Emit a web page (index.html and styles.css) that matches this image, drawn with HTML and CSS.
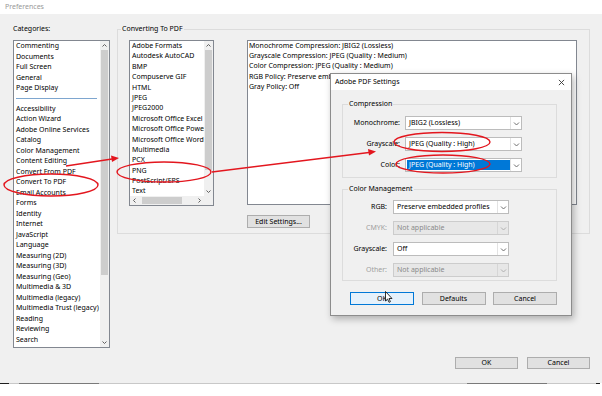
FILE: index.html
```html
<!DOCTYPE html>
<html lang="en">
<head>
  <meta charset="UTF-8">
  <title>Preferences</title>
  <link rel="stylesheet" href="styles.css">
</head>
<body>
  <div class="window">
    <div class="titlebar">Preferences</div>
    <div class="content">
      <div class="panes">
        <div class="categories">
          <div class="cat-label">Categories:</div>
          <div class="listbox cat-list">
            <ul class="items">
              <li>Commenting</li>
              <li>Documents</li>
              <li>Full Screen</li>
              <li>General</li>
              <li>Page Display</li>
              <li class="sep"></li>
              <li>Accessibility</li>
              <li>Action Wizard</li>
              <li>Adobe Online Services</li>
              <li>Catalog</li>
              <li>Color Management</li>
              <li>Content Editing</li>
              <li>Convert From PDF</li>
              <li>Convert To PDF</li>
              <li>Email Accounts</li>
              <li>Forms</li>
              <li>Identity</li>
              <li>Internet</li>
              <li>JavaScript</li>
              <li>Language</li>
              <li>Measuring (2D)</li>
              <li>Measuring (3D)</li>
              <li>Measuring (Geo)</li>
              <li>Multimedia &amp; 3D</li>
              <li>Multimedia (legacy)</li>
              <li>Multimedia Trust (legacy)</li>
              <li>Reading</li>
              <li>Reviewing</li>
              <li>Search</li>
              <li>Security</li>
            </ul>
            <div class="vscroll">
              <svg class="arrow" viewBox="0 0 9 9"><polyline points="2.5,5.5 4.5,3.5 6.5,5.5"/></svg>
              <div class="track"><div class="thumb cat-thumb"></div></div>
              <svg class="arrow" viewBox="0 0 9 9"><polyline points="2.5,3.5 4.5,5.5 6.5,3.5"/></svg>
            </div>
          </div>
        </div>

        <fieldset class="group convert">
          <legend>Converting To PDF</legend>
          <div class="convert-body">
            <div class="listbox fmt-list">
              <ul class="items">
                <li>Adobe Formats</li>
                <li>Autodesk AutoCAD</li>
                <li>BMP</li>
                <li>Compuserve GIF</li>
                <li>HTML</li>
                <li>JPEG</li>
                <li>JPEG2000</li>
                <li>Microsoft Office Excel</li>
                <li>Microsoft Office PowerPoint</li>
                <li>Microsoft Office Word</li>
                <li>Multimedia</li>
                <li>PCX</li>
                <li>PNG</li>
                <li>PostScript/EPS</li>
                <li>Text</li>
              </ul>
              <div class="vscroll">
                <svg class="arrow" viewBox="0 0 9 9"><polyline points="2.5,5.5 4.5,3.5 6.5,5.5"/></svg>
                <div class="track"><div class="thumb fmt-thumb"></div></div>
                <svg class="arrow" viewBox="0 0 9 9"><polyline points="2.5,3.5 4.5,5.5 6.5,3.5"/></svg>
              </div>
              <div class="hscroll">
                <svg class="arrow" viewBox="0 0 9 9"><polyline points="5.5,2.5 3.5,4.5 5.5,6.5"/></svg>
                <div class="htrack"><div class="hthumb"></div></div>
                <svg class="arrow" viewBox="0 0 9 9"><polyline points="3.5,2.5 5.5,4.5 3.5,6.5"/></svg>
              </div>
              <div class="corner"></div>
            </div>
            <div class="summary-col">
              <div class="summary">
                <div>Monochrome Compression: JBIG2 (Lossless)</div>
                <div>Grayscale Compression: JPEG (Quality : Medium)</div>
                <div>Color Compression: JPEG (Quality : Medium)</div>
                <div>RGB Policy: Preserve embedded profiles</div>
                <div>Gray Policy: Off</div>
              </div>
              <button class="btn edit-btn">Edit Settings...</button>
            </div>
          </div>
        </fieldset>
      </div>

      <div class="footer">
        <button class="btn main-btn">OK</button>
        <button class="btn main-btn">Cancel</button>
      </div>
    </div>
    <div class="rule">
      <span class="seg dark" style="width: 9px"></span>
      <span class="seg" style="width: 10px"></span>
      <span class="seg mid" style="width: 80px"></span>
      <span class="seg" style="width: 368px"></span>
      <span class="seg mid" style="width: 80px"></span>
      <span class="seg" style="width: 49px"></span>
      <span class="seg dark" style="width: 4px"></span>
    </div>
  </div>

  <!-- Adobe PDF Settings dialog, floating over the preferences -->
  <div class="dialog">
    <div class="dlg-title">
      <span>Adobe PDF Settings</span>
      <svg class="close" viewBox="0 0 8 8"><path d="M1 1 L7 7 M7 1 L1 7"/></svg>
    </div>
    <div class="dlg-body">
      <fieldset class="group dlg-group">
        <legend>Compression</legend>
        <div class="fields comp">
          <label>Monochrome:</label>
          <div class="combo"><span class="val">JBIG2 (Lossless)</span><span class="drop"><svg viewBox="0 0 9 9"><polyline points="2,3.5 4.5,6 7,3.5"/></svg></span></div>
          <label>Grayscale:</label>
          <div class="combo"><span class="val">JPEG (Quality : High)</span><span class="drop"><svg viewBox="0 0 9 9"><polyline points="2,3.5 4.5,6 7,3.5"/></svg></span></div>
          <label>Color:</label>
          <div class="combo"><span class="val selected">JPEG (Quality : High)</span><span class="drop"><svg viewBox="0 0 9 9"><polyline points="2,3.5 4.5,6 7,3.5"/></svg></span></div>
        </div>
      </fieldset>
      <fieldset class="group dlg-group cm">
        <legend>Color Management</legend>
        <div class="fields colors">
          <label>RGB:</label>
          <div class="combo"><span class="val">Preserve embedded profiles</span><span class="drop"><svg viewBox="0 0 9 9"><polyline points="2,3.5 4.5,6 7,3.5"/></svg></span></div>
          <label class="off">CMYK:</label>
          <div class="combo disabled"><span class="val">Not applicable</span><span class="drop"><svg viewBox="0 0 9 9"><polyline points="2,3.5 4.5,6 7,3.5"/></svg></span></div>
          <label>Grayscale:</label>
          <div class="combo"><span class="val">Off</span><span class="drop"><svg viewBox="0 0 9 9"><polyline points="2,3.5 4.5,6 7,3.5"/></svg></span></div>
          <label class="off">Other:</label>
          <div class="combo disabled"><span class="val">Not applicable</span><span class="drop"><svg viewBox="0 0 9 9"><polyline points="2,3.5 4.5,6 7,3.5"/></svg></span></div>
        </div>
      </fieldset>
      <div class="dlg-buttons">
        <button class="btn dlg-btn focus">OK</button>
        <button class="btn dlg-btn">Defaults</button>
        <button class="btn dlg-btn">Cancel</button>
      </div>
    </div>
  </div>

  <!-- red hand-drawn annotations + mouse pointer -->
  <svg class="marks" viewBox="0 0 602 396">
    <g class="red">
      <ellipse cx="51" cy="185" rx="47" ry="11"/>
      <ellipse cx="164" cy="172" rx="47" ry="10"/>
      <ellipse cx="442" cy="142" rx="48" ry="9.5"/>
      <ellipse cx="443" cy="164" rx="47" ry="9"/>
      <line x1="66" y1="166" x2="112" y2="159"/>
      <line x1="212" y1="172" x2="369" y2="152.5"/>
    </g>
    <polygon class="head" points="119,158 111,155.5 112,162"/>
    <polygon class="head" points="376,151.5 368,149 369,155.5"/>
    <path class="cursor" d="M385.5 291.5 L385.5 301 L387.6 299 L389 302.3 L390.4 301.7 L389 298.5 L392 298.5 Z"/>
  </svg>
</body>
</html>
```

FILE: styles.css
```css
* {
  box-sizing: border-box;
}
body {
  margin: 0;
  width: 602px;
  height: 396px;
  position: relative;
  overflow: hidden;
  background: #fff;
  font: 7px/10.5px "Noto Sans", "Open Sans", sans-serif;
  color: #000;
}
.window {
  width: 602px;
  height: 384px;
  display: flex;
  flex-direction: column;
}
.titlebar {
  height: 14px;
  padding: 1px 5px 0;
  line-height: 12px;
  color: #999;
  background: #fff;
}
.content {
  flex: 1;
  background: #f0f0f0;
  padding: 10px 12px 0 13px;
  display: flex;
  flex-direction: column;
}
.panes {
  display: flex;
  gap: 7px;
  align-items: flex-start;
}
.categories {
  width: 97px;
}
.cat-label {
  line-height: 10px;
  margin-bottom: 6px;
}

/* list boxes */
.listbox {
  background: #fff;
  border: 1px solid #828790;
  overflow: hidden;
}
.cat-list {
  height: 308px;
  display: flex;
}
.items {
  list-style: none;
  margin: 0;
  padding: 0 0 0 2px;
  flex: 1;
  min-width: 0;
  overflow: hidden;
  white-space: nowrap;
}
.items li {
  height: 10.5px;
}
.fmt-list .items li {
  height: 10.4px;
}
.items li.sep {
  height: 10px;
  display: flex;
  align-items: center;
  padding-right: 3px;
}
.items li.sep::before {
  content: "";
  flex: 1;
  height: 1px;
  background: #7ea6cf;
}
.vscroll {
  width: 9px;
  background: #f0f0f0;
  display: flex;
  flex-direction: column;
}
.arrow {
  width: 9px;
  height: 9px;
  flex: none;
  fill: none;
  stroke: #606060;
  stroke-width: 1;
}
.track {
  flex: 1;
}
.thumb {
  width: 7px;
  margin: 0 auto;
  background: #cdcdcd;
}
.cat-thumb {
  height: 225px;
}
.fmt-thumb {
  height: 120px;
}
.hscroll {
  height: 9px;
  background: #f0f0f0;
  display: flex;
}
.htrack {
  flex: 1;
  display: flex;
  align-items: center;
}
.hthumb {
  width: 40px;
  height: 7px;
  margin-left: 3px;
  background: #cdcdcd;
}
.corner {
  background: #f0f0f0;
}

/* group boxes */
.group {
  margin: 0;
  padding: 0;
  border: 1px solid #dcdcdc;
  min-width: 0;
}
.group legend {
  padding: 0 1px;
  line-height: 10px;
}
.convert {
  flex: 0 0 473px;
}
.convert legend {
  margin-left: 3px;
}
.convert-body {
  display: flex;
  gap: 33px;
  padding: 6px 12px 5px 11px;
}
.fmt-list {
  width: 85px;
  height: 166px;
  display: grid;
  grid-template-columns: 1fr 9px;
  grid-template-rows: 1fr 9px;
}
.summary-col {
  width: 330px;
}
.summary {
  height: 165px;
  background: #fff;
  border: 1px solid #828790;
  padding: 0 1px;
  line-height: 10.2px;
  white-space: nowrap;
  overflow: hidden;
}

/* buttons */
.btn {
  font: inherit;
  color: #000;
  background: #e1e1e1;
  border: 1px solid #adadad;
  padding: 0;
  height: 13px;
  line-height: 11px;
}
.edit-btn {
  width: 63px;
  margin-top: 10px;
}
.footer {
  display: flex;
  justify-content: flex-end;
  gap: 9px;
  margin-top: 9px;
}
.main-btn {
  width: 63px;
  height: 12px;
  line-height: 10px;
}

.rule {
  height: 1px;
  display: flex;
  background: #fff;
}
.seg {
  height: 1px;
  background: #c8c8c8;
}
.seg.mid {
  background: #7a7a7a;
}
.seg.dark {
  background: #1e1e1e;
}

/* dialog */
.dialog {
  position: absolute;
  left: 330px;
  top: 73px;
  width: 242px;
  height: 243px;
  background: #f0f0f0;
  border: 1px solid #8c8c8c;
  box-shadow: 2px 3px 7px rgba(0, 0, 0, .28);
}
.dlg-title {
  height: 16px;
  background: #fff;
  display: flex;
  justify-content: space-between;
  align-items: center;
  padding: 0 6px 0 4px;
}
.close {
  width: 7px;
  height: 7px;
  stroke: #333;
  stroke-width: 1;
}
.dlg-body {
  padding: 9px 14px 0 11px;
}
.dlg-group legend {
  margin-left: 5px;
}
.dlg-group.cm {
  margin-top: 6px;
}
.fields {
  display: grid;
  align-items: center;
  row-gap: 7px;
}
.fields label {
  text-align: right;
}
.fields label.off {
  color: #a0a0a0;
}
.comp {
  grid-template-columns: 57px 117px;
  column-gap: 5px;
  padding: 7px 0 5px;
}
.colors {
  grid-template-columns: 44px 116px;
  column-gap: 6px;
  padding: 6px 0 3px;
}
.combo {
  height: 14px;
  display: flex;
  background: #fff;
  border: 1px solid #bcbcbc;
}
.combo .val {
  flex: 1;
  margin: 1px 0 1px 1px;
  padding-left: 2px;
  line-height: 10px;
  white-space: nowrap;
}
.combo .val.selected {
  background: #0078d7;
  color: #fff;
}
.combo .drop {
  width: 11px;
  border-left: 1px solid #e3e3e3;
  display: flex;
  align-items: center;
  justify-content: center;
}
.combo .drop svg {
  width: 9px;
  height: 9px;
  fill: none;
  stroke: #707070;
}
.combo.disabled {
  background: #e7e7e7;
  border-color: #cccccc;
  color: #8a8a8a;
}
.combo.disabled .drop {
  border-left-color: #d6d6d6;
}
.combo.disabled .drop svg {
  stroke: #b0b0b0;
}
.dlg-buttons {
  display: flex;
  justify-content: space-between;
  padding-left: 8px;
  margin-top: 11px;
}
.dlg-btn {
  width: 64px;
}
.dlg-btn.focus {
  background: #e5f1fb;
  border-color: #0078d7;
}

/* annotations */
.marks {
  position: absolute;
  left: 0;
  top: 0;
  width: 602px;
  height: 396px;
  pointer-events: none;
}
.red {
  fill: none;
  stroke: #e3161e;
  stroke-width: 1.4;
}
.head {
  fill: #e3161e;
}
.cursor {
  fill: #fff;
  stroke: #000;
  stroke-width: .8;
}
```
